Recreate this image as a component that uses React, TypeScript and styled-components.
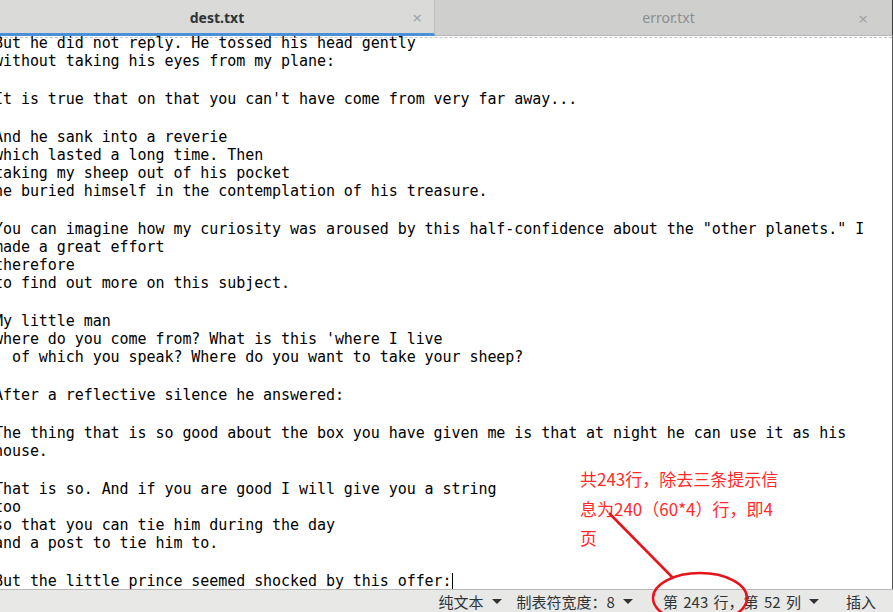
import React from "react";
import styled, { createGlobalStyle } from "styled-components";

const Global = createGlobalStyle`
  html, body { margin: 0; padding: 0; overflow: hidden; background: #ffffff; }
  #root { width: 893px; height: 612px; }
`;

const Window = styled.div`
  position: relative;
  width: 893px;
  height: 612px;
  display: flex;
  flex-direction: column;
  overflow: hidden;
  background: #ffffff;
  font-family: "Noto Sans", "Noto Sans CJK SC", sans-serif;
`;

const TabBar = styled.div`
  display: flex;
  height: 36px;
  flex: 0 0 36px;
  background: #cfcfcf;
`;

const Tab = styled.div<{ $active?: boolean }>`
  position: relative;
  flex: ${(p) => (p.$active ? "0 0 435px" : "1 1 auto")};
  display: flex;
  align-items: center;
  justify-content: center;
  box-sizing: border-box;
  background: ${(p) => (p.$active ? "#dadad9" : "#cfcfce")};
  border-right: 1px solid ${(p) => (p.$active ? "#bdbdbd" : "#3a3a3a")};
  border-bottom: ${(p) => (p.$active ? "3px solid #4a90d9" : "1px solid #b6b6b6")};
  padding-top: ${(p) => (p.$active ? "2px" : "0")};
  padding-left: ${(p) => (p.$active ? "0" : "10px")};
  color: ${(p) => (p.$active ? "#2e3436" : "#8b8e8f")};
  font-size: 14px;
  font-weight: ${(p) => (p.$active ? 700 : 400)};
`;

const Close = styled.span<{ $right: number }>`
  position: absolute;
  right: ${(p) => p.$right}px;
  top: 50%;
  transform: translateY(-50%);
  font-size: 17px;
  font-weight: 400;
  color: #a2a4a4;
`;

const Dashes = styled.div`
  height: 0;
  border-top: 1px dashed #c4c4c4;
  margin-top: 1px;
`;

const Editor = styled.div`
  flex: 1 1 auto;
  overflow: hidden;
  border-right: 1px solid #555;
  position: relative;
`;

const ScrollMark = styled.div`
  position: absolute;
  right: -1px;
  top: 33px;
  width: 1px;
  height: 38px;
  background: #4a90d9;
`;

const Text = styled.div`
  margin: -4px 0 0 -6px;
  font-family: "DejaVu Sans Mono", "Liberation Mono", monospace;
  font-size: 15px;
  letter-spacing: -0.06px;
  color: #000000;
  white-space: pre;
`;

const Line = styled.div<{ $blank?: boolean }>`
  height: ${(p) => (p.$blank ? 20 : 18)}px;
  line-height: 18px;
`;

const Caret = styled.span`
  display: inline-block;
  width: 1px;
  height: 17px;
  background: #000;
  vertical-align: -4px;
`;

const StatusBar = styled.div`
  flex: 0 0 23px;
  height: 23px;
  box-sizing: border-box;
  border-top: 1px solid #b9b9b9;
  background: #e8e8e7;
  display: flex;
  align-items: center;
  justify-content: flex-end;
  padding-right: 17px;
  font-family: "Noto Sans CJK SC", "Noto Sans", sans-serif;
  font-size: 15px;
  color: #2e3436;
`;

const StatusItem = styled.div<{ $gap?: number }>`
  display: flex;
  align-items: center;
  margin-left: ${(p) => p.$gap ?? 0}px;
  white-space: pre;
  word-spacing: 2px;
`;

const Arrow = styled.span`
  display: inline-block;
  width: 0;
  height: 0;
  border-left: 5px solid transparent;
  border-right: 5px solid transparent;
  border-top: 5px solid #2e3436;
  margin-left: 8px;
`;

const Note = styled.div`
  position: absolute;
  left: 580px;
  top: 464px;
  font-family: "Noto Sans CJK SC", sans-serif;
  font-size: 17px;
  line-height: 29.5px;
  color: #ff2b2b;
  white-space: pre;
`;

const Overlay = styled.svg`
  position: absolute;
  left: 0;
  top: 0;
  pointer-events: none;
`;

const lines = [
  "But he did not reply. He tossed his head gently",
  "without taking his eyes from my plane:",
  "",
  "It is true that on that you can't have come from very far away...",
  "",
  "And he sank into a reverie",
  "which lasted a long time. Then",
  "taking my sheep out of his pocket",
  "he buried himself in the contemplation of his treasure.",
  "",
  'You can imagine how my curiosity was aroused by this half-confidence about the "other planets." I',
  "made a great effort",
  "therefore",
  "to find out more on this subject.",
  "",
  "My little man",
  "where do you come from? What is this 'where I live",
  "  of which you speak? Where do you want to take your sheep?",
  "",
  "After a reflective silence he answered:",
  "",
  "The thing that is so good about the box you have given me is that at night he can use it as his",
  "house.",
  "",
  "That is so. And if you are good I will give you a string",
  "too",
  "so that you can tie him during the day",
  "and a post to tie him to.",
  "",
];

export default function App() {
  return (
    <>
      <Global />
      <Window>
        <TabBar>
          <Tab $active>
            dest.txt
            <Close $right={12}>×</Close>
          </Tab>
          <Tab>
            error.txt
            <Close $right={24}>×</Close>
          </Tab>
        </TabBar>
        <Editor>
          <Dashes />
          <ScrollMark />
          <Text>
            {lines.map((l, i) => (
              <Line key={i} $blank={l === ""}>
                {l}
              </Line>
            ))}
            <Line>
              {"But the little prince seemed shocked by this offer:"}
              <Caret />
            </Line>
          </Text>
        </Editor>
        <StatusBar>
          <StatusItem>
            纯文本
            <Arrow />
          </StatusItem>
          <StatusItem $gap={15}>
            制表符宽度：8
            <Arrow />
          </StatusItem>
          <StatusItem $gap={30}>
            第 243 行，第 52 列
            <Arrow />
          </StatusItem>
          <StatusItem $gap={27}>插入</StatusItem>
        </StatusBar>
        <Note>
          {"共243行，除去三条提示信\n息为240（60*4）行，即4\n页"}
        </Note>
        <Overlay width="893" height="612" viewBox="0 0 893 612">
          <line x1="609" y1="513" x2="673" y2="578" stroke="#e8141c" strokeWidth="2.5" />
          <ellipse cx="700" cy="598" rx="47" ry="25" fill="none" stroke="#e8141c" strokeWidth="2.5" />
        </Overlay>
      </Window>
    </>
  );
}
